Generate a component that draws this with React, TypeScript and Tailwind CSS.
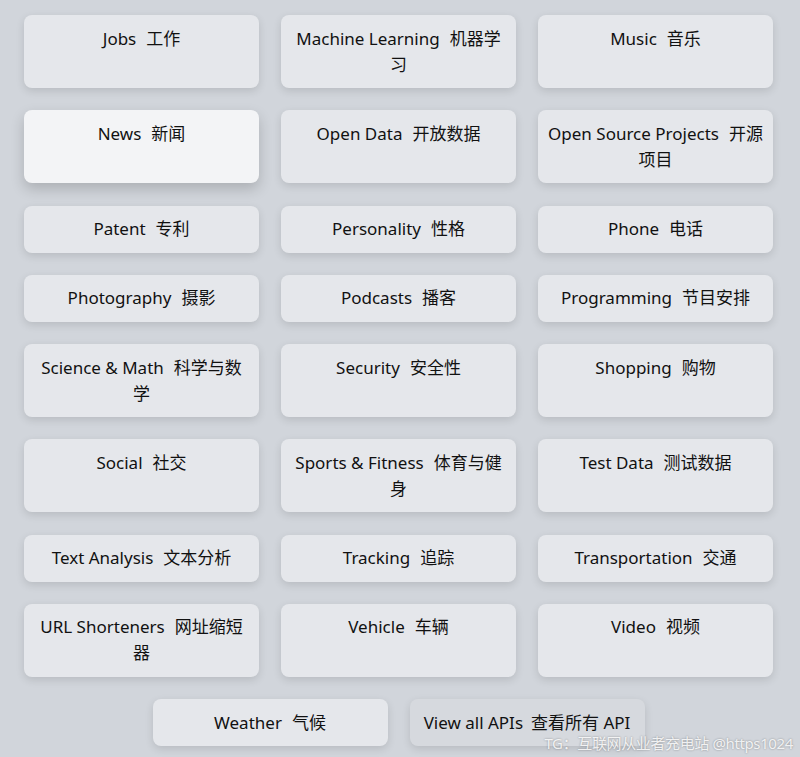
const items: [string, string][] = [
  ['Jobs', '工作'],
  ['Machine Learning', '机器学习'],
  ['Music', '音乐'],
  ['News', '新闻'],
  ['Open Data', '开放数据'],
  ['Open Source Projects', '开源项目'],
  ['Patent', '专利'],
  ['Personality', '性格'],
  ['Phone', '电话'],
  ['Photography', '摄影'],
  ['Podcasts', '播客'],
  ['Programming', '节目安排'],
  ['Science & Math', '科学与数学'],
  ['Security', '安全性'],
  ['Shopping', '购物'],
  ['Social', '社交'],
  ['Sports & Fitness', '体育与健身'],
  ['Test Data', '测试数据'],
  ['Text Analysis', '文本分析'],
  ['Tracking', '追踪'],
  ['Transportation', '交通'],
  ['URL Shorteners', '网址缩短器'],
  ['Vehicle', '车辆'],
  ['Video', '视频'],
  ['Weather', '气候'],
];

const font = { fontFamily: '"Noto Sans", "Noto Sans CJK SC", sans-serif' };

export default function App() {
  return (
    <div className="relative min-h-[757px] bg-[#d1d5db] pl-6 pr-[27px] pt-[15px] text-[#111]" style={font}>
      <div className="flex flex-wrap justify-center gap-x-[22px] gap-y-[22.25px]">
        {items.map(([en, zh]) => {
          const hover = en === 'News';
          return (
            <a
              key={en}
              href="#"
              className={
                'w-[235px] rounded-lg px-[9.5px] py-[10.5px] text-center text-[17px] leading-[26px] ' +
                (hover
                  ? 'bg-[#f3f4f6] shadow-[0_6px_14px_rgba(0,0,0,0.18)]'
                  : 'bg-[#e5e7eb] shadow-[0_3px_8px_rgba(0,0,0,0.12)]')
              }
            >
              {en}
              <span className="ml-[10px]">{zh}</span>
            </a>
          );
        })}
        <a
          href="#"
          className="w-[235px] rounded-lg bg-[#d6d9de] px-2 py-[10.5px] text-center text-[17px] leading-[26px] shadow-[0_3px_8px_rgba(0,0,0,0.12)]"
        >
          View all APIs<span className="ml-[8px]">查看所有 API</span>
        </a>
      </div>
      <div className="absolute bottom-[3px] right-[7px] text-[15px] tracking-tight text-white/85 [text-shadow:0_0_2px_rgba(0,0,0,0.4)]">
        TG：互联网从业者充电站 @https1024
      </div>
    </div>
  );
}
